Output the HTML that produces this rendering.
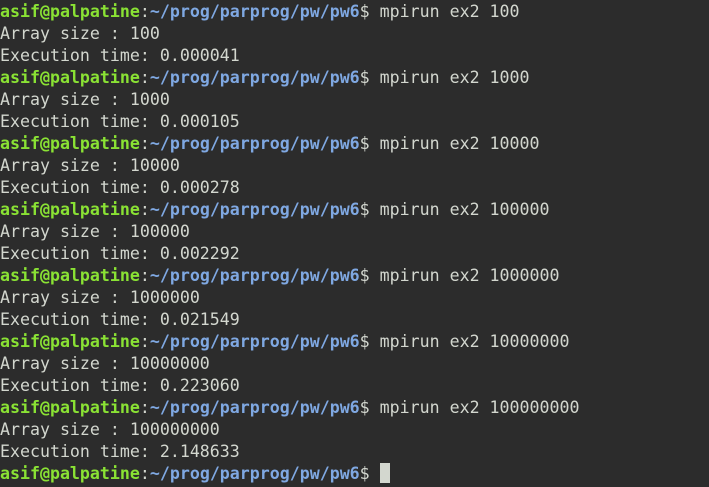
<!DOCTYPE html><html><head><style>
html,body{margin:0;background:#2c2c2c;width:709px;height:487px;overflow:hidden}
pre{margin:0;padding:1px 0 0 0;font-family:"DejaVu Sans Mono",monospace;font-size:16.6px;line-height:22px;color:#d3d7cf}
.g{color:#8ae234;font-weight:bold}.b{color:#7fa8e2;font-weight:bold}
.c{display:inline-block;width:10px;height:20px;background:#d3d7cf;vertical-align:-4px}
</style></head><body><pre><span class="g">asif@palpatine</span>:<span class="b">~/prog/parprog/pw/pw6</span>$ mpirun ex2 100
Array size : 100
Execution time: 0.000041
<span class="g">asif@palpatine</span>:<span class="b">~/prog/parprog/pw/pw6</span>$ mpirun ex2 1000
Array size : 1000
Execution time: 0.000105
<span class="g">asif@palpatine</span>:<span class="b">~/prog/parprog/pw/pw6</span>$ mpirun ex2 10000
Array size : 10000
Execution time: 0.000278
<span class="g">asif@palpatine</span>:<span class="b">~/prog/parprog/pw/pw6</span>$ mpirun ex2 100000
Array size : 100000
Execution time: 0.002292
<span class="g">asif@palpatine</span>:<span class="b">~/prog/parprog/pw/pw6</span>$ mpirun ex2 1000000
Array size : 1000000
Execution time: 0.021549
<span class="g">asif@palpatine</span>:<span class="b">~/prog/parprog/pw/pw6</span>$ mpirun ex2 10000000
Array size : 10000000
Execution time: 0.223060
<span class="g">asif@palpatine</span>:<span class="b">~/prog/parprog/pw/pw6</span>$ mpirun ex2 100000000
Array size : 100000000
Execution time: 2.148633
<span class="g">asif@palpatine</span>:<span class="b">~/prog/parprog/pw/pw6</span>$ <span class="c"></span></pre></body></html>
